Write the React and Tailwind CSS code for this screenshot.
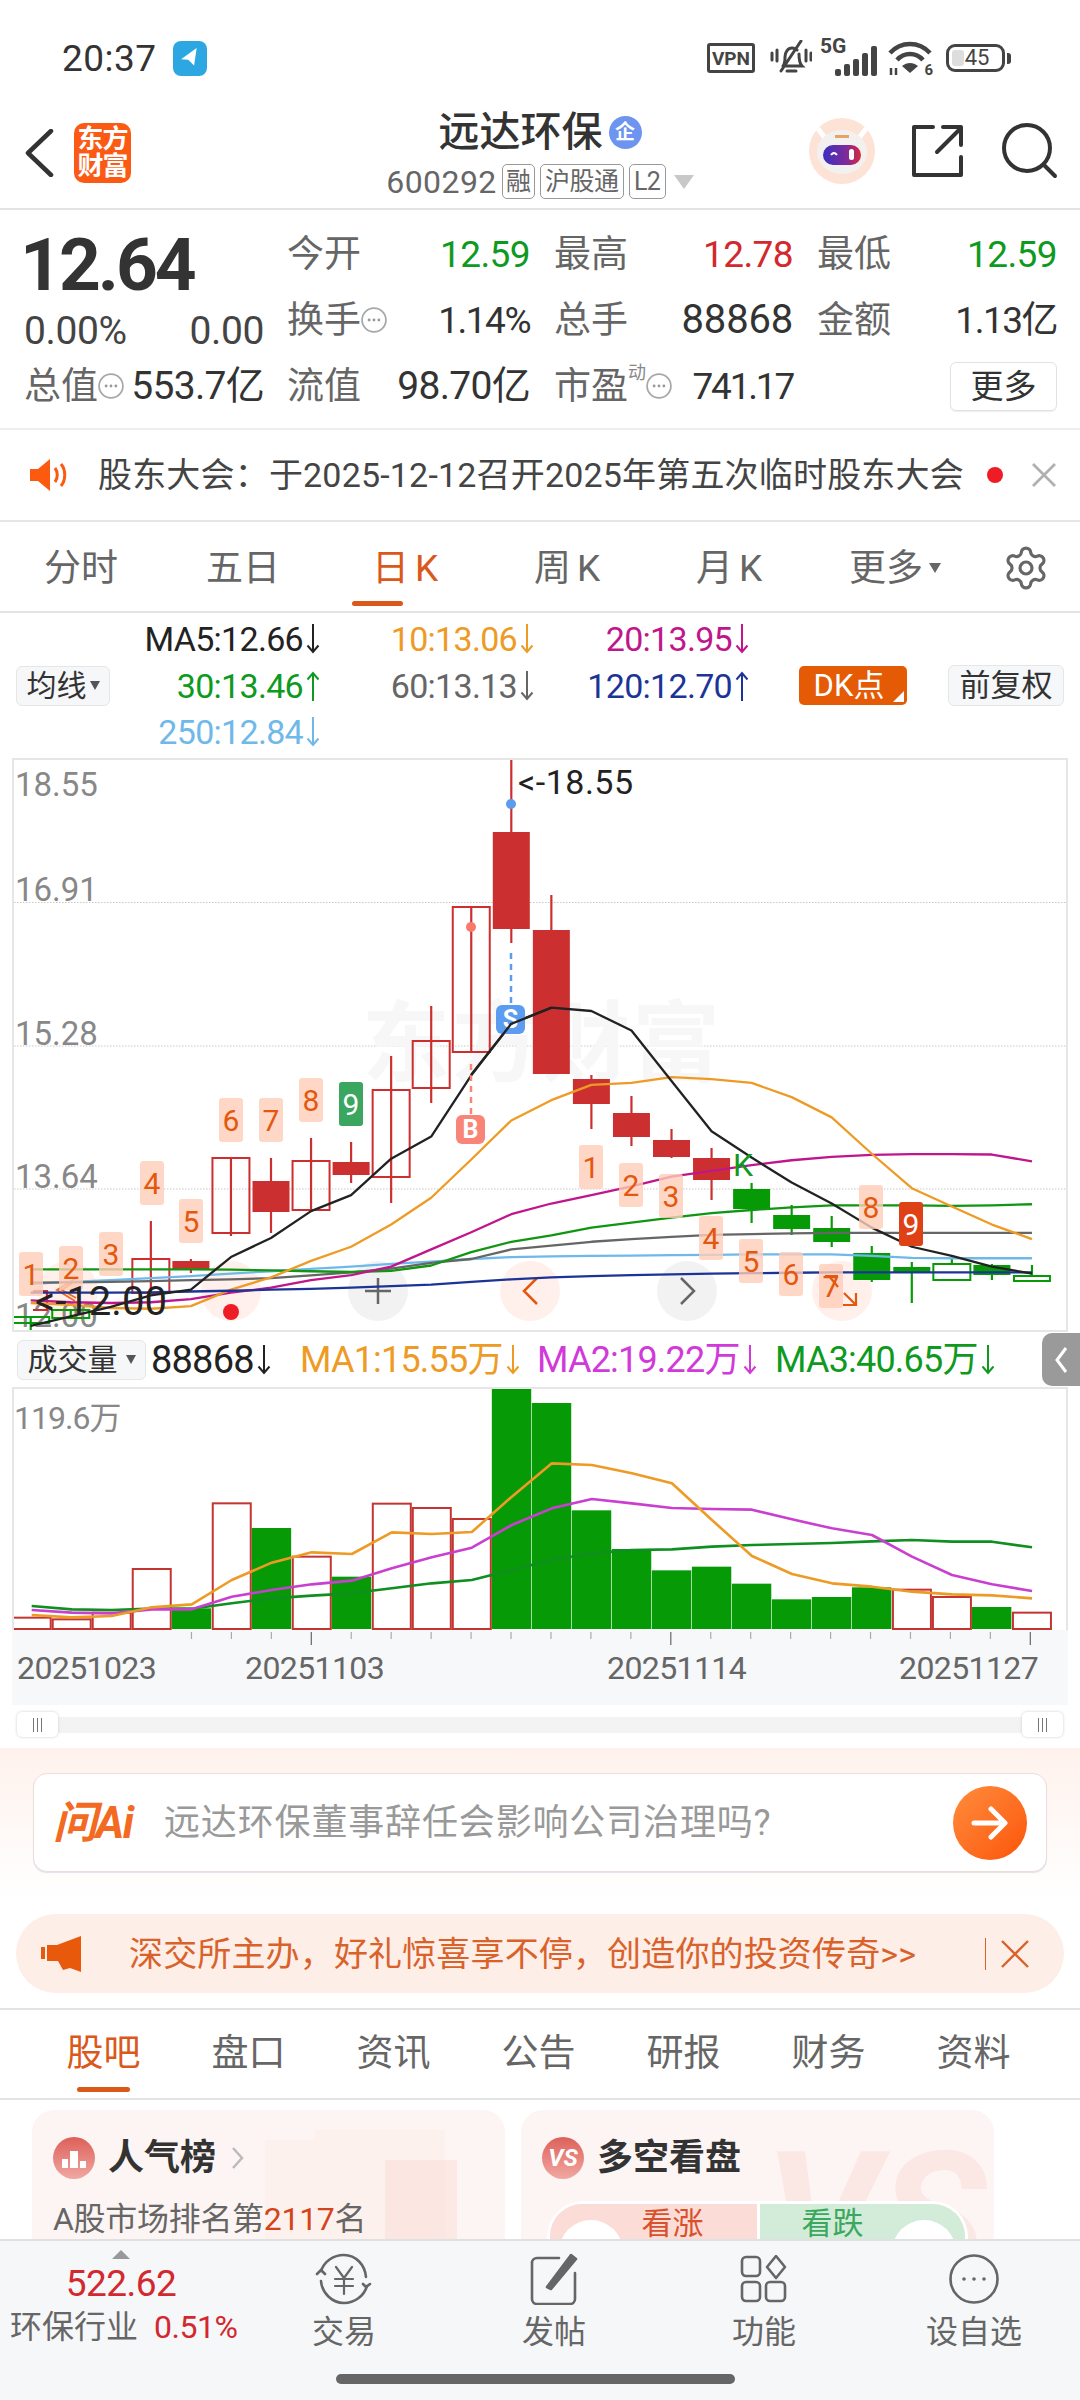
import React from "react";
import { Settings } from "lucide-react";

const cx = (i) => 30.7 + 40.05 * i;
const zy = (z) => 750 + z / 2.613;
const RED = "#cc2f2f";
const GREEN = "#079a07";

const candles = [
  [0, "h", GREEN, 1317, 1323, 1317, 1331],
  [1, "h", GREEN, 1310, 1318, 1310, 1318],
  [3, "h", RED, 1259, 1293, 1221, 1293],
  [4, "f", RED, 1261, 1269, 1259, 1273],
  [5, "h", RED, 1158, 1233, 1158, 1236],
  [6, "f", RED, 1181, 1212, 1158, 1233],
  [7, "h", RED, 1161, 1210, 1138, 1210],
  [8, "f", RED, 1162, 1175, 1142, 1183],
  [9, "h", RED, 1090, 1177, 1056, 1203],
  [10, "h", RED, 1041, 1088, 1006, 1103],
  [11, "h", RED, 907, 1052, 907, 1052],
  [12, "f", RED, 832, 929, 759, 943],
  [13, "f", RED, 930, 1074, 895, 1074],
  [14, "f", RED, 1079, 1104, 1075, 1129],
  [15, "f", RED, 1113, 1137, 1096, 1146],
  [16, "f", RED, 1140, 1157, 1129, 1158],
  [17, "f", RED, 1158, 1180, 1148, 1200],
  [18, "f", GREEN, 1189, 1209, 1183, 1223],
  [19, "f", GREEN, 1215, 1229, 1205, 1235],
  [20, "f", GREEN, 1228, 1242, 1216, 1247],
  [21, "f", GREEN, 1253, 1280, 1246, 1282],
  [22, "f", GREEN, 1267, 1273, 1262, 1303],
  [23, "h", GREEN, 1264, 1280, 1256, 1264],
  [24, "f", GREEN, 1265, 1275, 1264, 1280],
  [25, "h", GREEN, 1276, 1281, 1265, 1276],
];

const maLines = [
  ["#6fb9ea", [1395,1390,1385,1380,1375,1368,1362,1356,1350,1343,1337,1330,1325,1323,1322,1321,1320,1319,1318,1318,1318,1322,1327,1328,1328,1328]],
  ["#666666", [1392,1391,1390,1388,1385,1383,1380,1373,1365,1355,1340,1330,1305,1295,1285,1278,1272,1267,1265,1263,1262,1262,1262,1262,1262,1262]],
  ["#119611", [1357,1357,1357,1357,1357,1358,1360,1362,1364,1361,1347,1312,1285,1268,1248,1235,1222,1210,1202,1195,1190,1190,1190,1191,1190,1187]],
  ["#c0168c", [1438,1443,1445,1443,1435,1418,1405,1385,1372,1350,1305,1260,1213,1185,1163,1140,1115,1100,1085,1072,1063,1058,1056,1056,1057,1075]],
  ["#ee9b26", [1445,1450,1458,1460,1453,1410,1378,1335,1298,1240,1170,1070,968,915,875,870,855,860,870,907,960,1055,1145,1193,1240,1278]],
  ["#1d3497", [1418,1418,1418,1417,1415,1413,1410,1408,1405,1401,1397,1390,1383,1378,1375,1372,1370,1368,1367,1366,1365,1365,1365,1365,1365,1365]],
  ["#222222", [1505,1480,1455,1425,1410,1325,1275,1205,1163,1068,1010,850,715,673,682,733,865,996,1065,1130,1185,1248,1298,1322,1350,1368]],
];

const tdLabels = [
  ["1", 19, 1252], ["2", 59, 1246], ["3", 99, 1232], ["4", 140, 1161], ["5", 179, 1199], ["6", 219, 1098], ["7", 259, 1098], ["8", 299, 1078],
  ["1", 579, 1145], ["2", 619, 1163], ["3", 659, 1174], ["4", 699, 1216], ["5", 739, 1239], ["6", 779, 1252], ["7", 819, 1264], ["8", 859, 1185],
];

const volTops = [[860,"h"],[865,"h"],[845,"h"],[714,"h"],[835,"f"],[517,"h"],[594,"f"],[677,"h"],[740,"f"],[518,"h"],[531,"h"],[564,"h"],[172,"f"],[219,"f"],[541,"f"],[657,"f"],[721,"f"],[710,"f"],[761,"f"],[808,"f"],[801,"f"],[772,"f"],[776,"h"],[798,"h"],[831,"f"],[845,"h"]];
const volLines = [
  ["#0f8f1f", [828,838,840,836,836,820,805,797,790,775,760,750,720,690,670,660,658,650,645,642,639,634,630,635,635,652]],
  ["#c93fd0", [840,848,850,838,838,800,780,763,752,715,682,653,585,535,507,520,534,537,539,568,595,615,680,735,763,783]],
  ["#ee9b26", [855,862,858,832,823,750,698,667,672,607,612,606,500,400,405,430,460,570,678,732,760,770,785,793,796,805]],
];

function Arrow({ up, h = 30 }) {
  return (
    <svg width="14" height={h} viewBox={`0 0 14 ${h}`} className="shrink-0 ml-[3px]" fill="none" stroke="currentColor" strokeWidth="2">
      {up ? <path d={`M7 ${h}V2M1.500 8.500 7 2l5.500 6.500`} /> : <path d={`M7 0V${h - 2}M1.500 ${h - 8.5} 7 ${h - 2}l5.500-6.500`} />}
    </svg>
  );
}

function Dots({ size = 24 }) {
  return (
    <svg width={size} height={size} viewBox="0 0 24 24" className="shrink-0">
      <circle cx="12" cy="12" r="11" fill="none" stroke="#a8a8a8" strokeWidth="1.600" />
      <circle cx="7.500" cy="12" r="1.300" fill="#999" />
      <circle cx="12" cy="12" r="1.300" fill="#999" />
      <circle cx="16.500" cy="12" r="1.300" fill="#999" />
    </svg>
  );
}

function CloseX({ size, color, sw = 2.4 }) {
  return (
    <svg width={size} height={size} viewBox={`0 0 ${size} ${size}`} className="shrink-0" fill="none" stroke={color} strokeWidth={sw}>
      <path d={`M1 1 ${size - 1} ${size - 1}M${size - 1} 1 1 ${size - 1}`} />
    </svg>
  );
}

function StatusBar() {
  return (
    <div className="h-[100px] flex items-center pl-[62px] pr-[69px] pt-[16px]">
      <span className="text-[37px] text-[#333] tracking-[0.5px] leading-none">20:37</span>
      <div className="ml-[16px] w-[34px] h-[35px] rounded-[8px] bg-[#2da7e2] flex items-center justify-center">
        <svg width="20" height="20" viewBox="0 0 20 20"><path d="M18 1 1 10l7 1.500L13 18z" fill="#fff" transform="rotate(-8 10 10)" /></svg>
      </div>
      <div className="ml-auto flex items-center text-[#444]">
        <div className="w-[48px] h-[30px] border-[3px] border-[#444] rounded-[3px] flex items-center justify-center text-[19px] font-bold leading-none">VPN</div>
        <svg className="ml-[15px]" width="42" height="36" viewBox="0 0 42 36" fill="none" stroke="#444" strokeWidth="3" strokeLinecap="round">
          <path d="M13 26c2-2 2-5 2-9 0-5 3-9 7-9 2 0 3 1 5 2M29 14c0 5 0 9 3 12H13M17 31h9M31 1 11 31M2 13v7M7 10v11M36 10v11M41 13v7" />
        </svg>
        <div className="ml-[8px] relative w-[60px] h-[38px]">
          <span className="absolute left-0 -top-[3px] text-[21px] font-bold leading-none">5G</span>
          <svg className="absolute left-[15px] top-[4px]" width="44" height="34" viewBox="0 0 44 34" fill="#444">
            <rect x="0" y="26" width="6" height="7" rx="2" /><rect x="9" y="21" width="6" height="12" rx="2" /><rect x="18" y="16" width="6" height="17" rx="2" /><rect x="27" y="10" width="6" height="23" rx="2" /><rect x="36" y="3" width="6" height="30" rx="2" />
          </svg>
        </div>
        <div className="ml-[8px] relative w-[44px] h-[36px]">
          <svg width="44" height="36" viewBox="0 0 44 36" fill="none" stroke="#444" strokeWidth="4.500">
            <path d="M2 13c11-12 29-12 40 0M9 20c7-8 19-8 26 0" />
            <path d="M14 26c5-4 11-4 16 0l-8 7z" fill="#444" stroke="none" />
            <path d="M3 28v7M8 28v7" strokeWidth="2.500" />
          </svg>
          <span className="absolute -right-[1px] -bottom-[2px] text-[15px] font-bold leading-none">6</span>
        </div>
        <div className="ml-[14px] w-[59px] h-[28px] border-[3px] border-[#444] rounded-[9px] relative flex items-center justify-center text-[22px] text-[#444] leading-none">
          <div className="absolute left-[3px] top-[3px] bottom-[3px] w-[12px] bg-[#ddd] rounded-[3px]" />
          <span className="relative ml-[3px]">45</span>
        </div>
        <div className="ml-[2px] w-[4px] h-[11px] rounded-r-[3px] bg-[#444]" />
      </div>
    </div>
  );
}

function Tag({ children, w }) {
  return (
    <div className={`h-[35px] border border-[#999] rounded-[5px] flex items-center justify-center text-[25px] text-[#666] leading-none tracking-[-0.5px] ${w}`}>{children}</div>
  );
}

function Header() {
  return (
    <div className="h-[108px] border-b-2 border-[#e3e3e3] grid grid-cols-[1fr_auto_1fr] items-start box-content">
      <div className="flex items-center pl-[24px] pt-[23px]">
        <svg width="30" height="48" viewBox="0 0 30 48" fill="none" stroke="#333" strokeWidth="4.500" strokeLinecap="round" strokeLinejoin="round"><path d="M27 2 4 24l23 22" /></svg>
        <div className="ml-[20px] w-[57px] h-[60px] rounded-[10px] bg-[#fc5a14] text-white text-[26px] leading-[27px] font-bold text-center flex flex-col items-center justify-center tracking-[-1px]">
          <span>东方</span><span>财富</span>
        </div>
      </div>
      <div className="flex flex-col items-center pt-[9px]">
        <div className="flex items-center h-[46px]">
          <span className="text-[41px] leading-none text-[#333] font-medium">远达环保</span>
          <div className="ml-[6px] w-[33px] h-[33px] rounded-full bg-[#6d94ee] text-white text-[20px] font-bold flex items-center justify-center leading-none">企</div>
        </div>
        <div className="flex items-center mt-[9px] gap-[5px]">
          <span className="text-[32px] leading-none text-[#666] tracking-[0.4px]">600292</span>
          <Tag w="w-[33px]">融</Tag>
          <Tag w="w-[84px]">沪股通</Tag>
          <Tag w="w-[37px]">L2</Tag>
          <div className="ml-[3px] w-0 h-0 border-l-[10px] border-r-[10px] border-t-[14px] border-l-transparent border-r-transparent border-t-[#c8c8c8]" />
        </div>
      </div>
      <div className="flex items-center justify-end pr-[22px] pt-[18px]">
        <svg width="66" height="66" viewBox="0 0 66 66">
          <defs>
            <linearGradient id="visor" x1="0" x2="1"><stop offset="0" stopColor="#3b2fc0" /><stop offset="0.6" stopColor="#7c2a9c" /><stop offset="1" stopColor="#d9283c" /></linearGradient>
          </defs>
          <circle cx="33" cy="33" r="33" fill="#fde2d6" />
          <path d="M10 12l6 8M56 12l-6 8" stroke="#fff" strokeWidth="5" strokeLinecap="round" />
          <ellipse cx="33" cy="34" rx="25" ry="22" fill="#f3f1f0" />
          <rect x="26" y="17" width="14" height="3" fill="#e8a262" />
          <rect x="14" y="27" width="38" height="20" rx="10" fill="url(#visor)" />
          <path d="M22 37q3-4 6 0" stroke="#fff" strokeWidth="2" fill="none" />
          <rect x="40" y="31" width="5" height="11" rx="2.500" fill="#fff" />
        </svg>
        <svg className="ml-[36px]" width="54" height="54" viewBox="0 0 54 54" fill="none" stroke="#333" strokeWidth="4" strokeLinecap="round" strokeLinejoin="round">
          <path d="M22 3H3v48h47V33M26 28 50 4M32 3h18v18" />
        </svg>
        <svg className="ml-[37px]" width="56" height="56" viewBox="0 0 56 56" fill="none" stroke="#333" strokeWidth="4" strokeLinecap="round">
          <circle cx="25" cy="25" r="23" /><path d="M42 42l11 11" />
        </svg>
      </div>
    </div>
  );
}

function Pair({ label, value, color = "text-[#333]", cls = "text-[37px] tracking-[-0.6px]", children }) {
  return (
    <div className="h-[66px] flex items-center justify-between">
      <div className="flex items-center text-[37px] text-[#666] leading-none">{label}{children}</div>
      <span className={`leading-none ${cls} ${color}`}>{value}</span>
    </div>
  );
}

function Quote() {
  return (
    <div className="h-[218px] flex pl-[24px] border-b-2 border-[#eeeeee] box-content">
      <div className="w-[240px] shrink-0 flex flex-col">
        <div className="h-[94px] pt-[22px] -ml-[4px] text-[73px] font-bold text-[#333] leading-[66px] tracking-[-3px]">12.64</div>
        <div className="h-[54px] flex items-center justify-between text-[39px] text-[#444] leading-none tracking-[-0.4px]">
          <span>0.00%</span><span>0.00</span>
        </div>
        <div className="h-[56px] flex items-center justify-between">
          <div className="flex items-center text-[37px] text-[#666] leading-none -mr-[5px]">总值<Dots size={26} /></div>
          <span className="text-[39px] text-[#333] leading-none tracking-[-0.7px]">553.7亿</span>
        </div>
      </div>
      <div className="ml-[23px] pt-[11px] grid grid-cols-[243px_239px_240px] gap-x-[24px] content-start">
        <Pair label="今开" value="12.59" color="text-[#0e9a1e]" />
        <Pair label="最高" value="12.78" color="text-[#d2282e]" />
        <Pair label="最低" value="12.59" color="text-[#0e9a1e]" />
        <Pair label="换手" value="1.14%" cls="text-[37px] tracking-[-1.500px]"><Dots size={26} /></Pair>
        <Pair label="总手" value="88868" cls="text-[40px] tracking-[-0.2px]" />
        <Pair label="金额" value="1.13亿" cls="text-[37px] tracking-[-1.500px]" />
        <Pair label="流值" value="98.70亿" cls="text-[39px] tracking-[-0.7px]" />
        <Pair label="市盈" value="741.17" cls="text-[37px] tracking-[-2.200px]">
          <div className="relative flex items-center">
            <span className="text-[18px] text-[#888] -mt-[26px]">动</span>
            <Dots size={26} />
          </div>
        </Pair>
        <div className="h-[66px] flex items-center justify-end">
          <div className="w-[107px] h-[49px] border border-[#e2e2e2] rounded-[6px] flex items-center justify-center text-[33px] text-[#333] leading-none shadow-[0_1px_1px_#eee]">更多</div>
        </div>
      </div>
    </div>
  );
}

function Notice() {
  return (
    <div className="h-[90px] border-b-2 border-[#e6e6e6] flex items-center box-content pl-[30px]">
      <svg width="40" height="32" viewBox="0 0 40 32" className="shrink-0">
        <path d="M0 10h8L20 0v32L8 22H0z" fill="#fb5a0f" />
        <path d="M25 9c3 4 3 10 0 14M31 5c5 6 5 16 0 22" stroke="#fb5a0f" strokeWidth="3" fill="none" />
      </svg>
      <span className="ml-[28px] text-[34px] text-[#444] leading-none whitespace-nowrap tracking-[0.18px]">股东大会：于2025-12-12召开2025年第五次临时股东大会</span>
      <div className="ml-[23px] w-[16px] h-[16px] rounded-full bg-[#ee1c25] shrink-0" />
      <div className="ml-[29px]"><CloseX size={24} color="#b0b0b0" sw={2.800} /></div>
    </div>
  );
}

function Tabs() {
  const items = ["分时", "五日", "日K", "周K", "月K"];
  return (
    <div className="h-[89px] border-b-2 border-[#e3e3e3] flex box-content">
      {items.map((t, i) => (
        <div key={t} className={`relative w-[162px] flex items-center justify-center text-[37px] leading-none pt-[3px] ${i === 2 ? "text-[#d9581a]" : "text-[#666]"}`}>
          {t[0]}{t[1] === "K" ? <span className="ml-[6px] font-normal">K</span> : t[1]}
          {i === 2 && <div className="absolute left-[28px] bottom-[5px] w-[51px] h-[5px] rounded-full bg-[#d9581a]" />}
        </div>
      ))}
      <div className="w-[162px] flex items-center justify-center text-[37px] text-[#666] leading-none pt-[3px] pl-[8px]">
        更多<span className="ml-[6px] w-0 h-0 border-l-[6px] border-r-[6px] border-t-[10px] border-l-transparent border-r-transparent border-t-[#666]" />
      </div>
      <div className="w-[106px] flex items-center justify-center pt-[3px] pl-px"><Settings size={48} strokeWidth={1.600} className="text-[#666]" /></div>
    </div>
  );
}

function Ma({ text, color, up }) {
  return (
    <div className={`h-[46.500px] flex items-center justify-end text-[34px] leading-none tracking-[-0.7px] ${color}`}>
      <span>{text}</span><Arrow up={up} />
    </div>
  );
}

function MaRow() {
  return (
    <div className="h-[145px] flex items-center pl-[16px]">
      <div className="w-[94px] h-[40px] border border-[#e6e6e6] bg-[#f6f7f9] rounded-[6px] flex items-center justify-center text-[30px] text-[#333] leading-none">
        均线<span className="ml-[3px] w-0 h-0 border-l-[5px] border-r-[5px] border-t-[9px] border-l-transparent border-r-transparent border-t-[#555]" />
      </div>
      <div className="grid grid-cols-[210px_214px_215px]">
        <Ma text="MA5:12.66" color="text-[#222]" />
        <Ma text="10:13.06" color="text-[#ee9b26]" />
        <Ma text="20:13.95" color="text-[#c0168c]" />
        <Ma text="30:13.46" color="text-[#0e9a1e]" up />
        <Ma text="60:13.13" color="text-[#666]" />
        <Ma text="120:12.70" color="text-[#1d3497]" up />
        <Ma text="250:12.84" color="text-[#6fb9ea]" />
      </div>
      <div className="ml-[50px] relative w-[108px] h-[39px] rounded-[5px] bg-[#e55a05] flex items-center justify-center text-[31px] text-white leading-none pr-[8px]">
        DK点
        <div className="absolute right-[3px] bottom-[3px] w-0 h-0 border-l-[11px] border-b-[11px] border-l-transparent border-b-white" />
      </div>
      <div className="ml-[41px] w-[116px] h-[41px] border border-[#e6e6e6] bg-[#f6f7f9] rounded-[6px] flex items-center justify-center text-[31px] text-[#333] leading-none">前复权</div>
    </div>
  );
}

function CircleBtn({ x, peach, children }) {
  return (
    <g>
      <circle cx={x} cy="1291" r="30" fill={peach ? "#ff6a3a" : "#000"} opacity={peach ? 0.1 : 0.05} />
      {children}
    </g>
  );
}

function KChart() {
  const w = 40;
  return (
    <div className="mx-[12px] w-[1056px] h-[574px] border-2 border-[#e6e6e6] bg-white overflow-hidden">
      <svg width="1052" height="570" viewBox="14 760 1052 570" className="block" fontFamily="Roboto, 'Noto Sans CJK SC', sans-serif">
        {[902.5, 1046, 1189].map((y) => (
          <line key={y} x1="14" x2="1066" y1={y} y2={y} stroke="#c9c9c9" strokeWidth="1" strokeDasharray="1.500 1.500" />
        ))}
        <text x="362" y="1074" fontSize="88" fontWeight="700" fill="#f7f7f7" letterSpacing="2">东方财富</text>
        {[["18.55", 796], ["16.91", 901], ["15.28", 1045], ["13.64", 1188], ["12.00", 1327]].map(([t, y]) => (
          <text key={t} x="15" y={y} fontSize="33" fill="#888">{t}</text>
        ))}
        <CircleBtn x={68} peach />
        <CircleBtn x={231} peach />
        <CircleBtn x={378}><path d="M378 1278v26M365 1291h26" stroke="#666" strokeWidth="2.500" /></CircleBtn>
        <CircleBtn x={530} peach><path d="M537 1278l-13 13 13 13" stroke="#e4570e" strokeWidth="2.500" fill="none" /></CircleBtn>
        <CircleBtn x={687}><path d="M681 1278l13 13-13 13" stroke="#666" strokeWidth="2.500" fill="none" /></CircleBtn>
        <CircleBtn x={842} peach />
        <circle cx="231" cy="1312" r="8" fill="#ee1c25" />
        {candles.map(([i, t, c, top, bot, wt, wb]) => {
          const x = cx(i);
          const bw = i === 25 ? 36 : w - 3;
          return (
            <g key={i}>
              <line x1={x} x2={x} y1={wt} y2={wb} stroke={c} strokeWidth="2.200" />
              <rect x={x - bw / 2} y={top} width={bw} height={bot - top} fill={t === "f" ? c : "none"} stroke={c} strokeWidth={t === "f" ? 0 : 2} />
            </g>
          );
        })}
        <path d="M33 1291h14v19H33" fill="none" stroke={RED} strokeWidth="2.200" />
        <path d="M78 1277 57 1290l18 11M72 1283 62 1290l14 8" fill="none" stroke="#e96d2c" strokeWidth="2" />
        {maLines.map(([c, ys]) => (
          <polyline key={c} fill="none" stroke={c} strokeWidth="2.300" strokeLinejoin="round" points={ys.map((z, i) => `${cx(i)},${zy(z)}`).join(" ")} />
        ))}
        {tdLabels.map(([t, x, y], k) => (
          <g key={k}>
            <rect x={x} y={y} width="24" height="44" rx="3" fill="#ffcdb8" opacity="0.8" />
            <text x={x + 12} y={y + 33} fontSize="30" fill="#e4570e" textAnchor="middle">{t}</text>
          </g>
        ))}
        <rect x="339" y="1082" width="24" height="44" rx="3" fill="#3aa660" />
        <text x="351" y="1115" fontSize="30" fill="#fff" textAnchor="middle">9</text>
        <rect x="899" y="1202" width="24" height="44" rx="3" fill="#df4116" />
        <text x="911" y="1235" fontSize="30" fill="#fff" textAnchor="middle">9</text>
        <path d="M825 1276h13M829 1276l9 11M856 1293v12h-13M856 1305l-12-12" fill="none" stroke="#e4570e" strokeWidth="2.200" />
        <line x1="471" x2="471" y1="1064" y2="1114" stroke="#f98578" strokeWidth="2.500" strokeDasharray="6 5" />
        <rect x="456" y="1115" width="29" height="29" rx="6" fill="#f98578" />
        <text x="470.500" y="1138" fontSize="25" fontWeight="700" fill="#fff" textAnchor="middle">B</text>
        <circle cx="471" cy="927" r="5" fill="#f9786a" />
        <line x1="511" x2="511" y1="953" y2="1003" stroke="#5b9cf0" strokeWidth="2.500" strokeDasharray="6 5" />
        <rect x="496" y="1005" width="29" height="29" rx="6" fill="#5b9cf0" />
        <text x="510.500" y="1028" fontSize="25" fontWeight="700" fill="#fff" textAnchor="middle">S</text>
        <polyline fill="none" stroke="#222" strokeWidth="2.300" points={`471,1075 511,1024 551,1008`} />
        <circle cx="511" cy="804" r="5" fill="#5b9cf0" />
        <text x="518" y="794" fontSize="34" fill="#222" letterSpacing="0.500">{"<-18.55"}</text>
        <text x="35" y="1315" fontSize="40" fill="#222">{"<-12.00"}</text>
        <text x="733" y="1176" fontSize="32" fill="#0e9a1e">K</text>
      </svg>
    </div>
  );
}

function VolHeader() {
  const Item = ({ t, c, w, size = "text-[36px]" }) => (
    <div className={`flex items-center leading-none tracking-[-0.8px] ${size} ${c} ${w}`}><span>{t}</span><Arrow /></div>
  );
  return (
    <div className="h-[55px] flex items-center pl-[17px]">
      <div className="w-[129px] h-[40px] border border-[#e6e6e6] bg-[#f6f7f9] rounded-[6px] flex items-center justify-center text-[30px] text-[#333] leading-none">
        成交量<span className="ml-[8px] w-0 h-0 border-l-[5px] border-r-[5px] border-t-[9px] border-l-transparent border-r-transparent border-t-[#555]" />
      </div>
      <div className="w-[5px]" />
      <Item t="88868" c="text-[#222]" w="w-[149px]" size="text-[38px]" />
      <Item t="MA1:15.55万" c="text-[#ee9b26]" w="w-[237px]" />
      <Item t="MA2:19.22万" c="text-[#d13ad8]" w="w-[238px]" />
      <Item t="MA3:40.65万" c="text-[#0e9a1e]" />
      <div className="ml-auto w-[38px] h-[53px] bg-[#9a9a9a] rounded-l-[10px] flex items-center justify-center">
        <svg width="14" height="28" viewBox="0 0 14 28" fill="none" stroke="#fff" strokeWidth="3"><path d="M12 2 3 14l9 12" /></svg>
      </div>
    </div>
  );
}

function VolChart() {
  const vy = (z) => 1330 + z / 3;
  const lx = (i) => (46 + 58.1 * i) / 1.452;
  return (
    <div className="mx-[12px] w-[1056px] h-[243px] border-x-2 border-t-2 border-[#e6e6e6] bg-white">
      <svg width="1052" height="241" viewBox="14 1389 1052 241" className="block" fontFamily="Roboto, 'Noto Sans CJK SC', sans-serif">
        {volTops.map(([z, t], i) => {
          const x = 11.7 + 40.01 * i;
          const top = vy(z);
          return t === "f" ? (
            <rect key={i} x={x} y={top} width="39.400" height={1629 - top} fill={GREEN} />
          ) : (
            <rect key={i} x={x + 1} y={top + 1} width="38" height={1628 - top} fill="#fff" stroke="#c23531" strokeWidth="2" />
          );
        })}
        {volLines.map(([c, ys]) => (
          <polyline key={c} fill="none" stroke={c} strokeWidth="2.600" strokeLinejoin="round" points={ys.map((z, i) => `${lx(i)},${vy(z)}`).join(" ")} />
        ))}
        <text x="14" y="1429" fontSize="32" fill="#888" letterSpacing="-1">119.6万</text>
      </svg>
    </div>
  );
}

function TimeAxis() {
  const ticks = Array.from({ length: 22 }, (_, k) => (278 + 58 * k) / 1.452);
  return (
    <div className="mx-[12px] w-[1056px] h-[75px] bg-[#f7f8fa]">
      <svg width="1056" height="16" viewBox="12 1630 1056 16" className="block">
        {ticks.map((x, k) => (
          <line key={k} x1={x} x2={x} y1="1632" y2={k === 3 || k === 12 || k === 21 ? 1645 : 1639} stroke={k === 3 || k === 12 || k === 21 ? "#666" : "#aaa"} strokeWidth="1.200" />
        ))}
      </svg>
      <div className="flex text-[32px] text-[#666] leading-none tracking-[-0.6px] mt-[6px]">
        <span className="ml-[5px] w-[139px]">20251023</span>
        <span className="ml-[89px] w-[134px]">20251103</span>
        <span className="ml-[228px] w-[130px]">20251114</span>
        <span className="ml-[162px] w-[133px]">20251127</span>
      </div>
    </div>
  );
}

function Handle() {
  return (
    <div className="w-[41px] h-[25px] bg-white rounded-[5px] shadow-[0_0_3px_#ccc] flex items-center justify-center gap-[3px] shrink-0">
      <i className="w-px h-[14px] bg-[#777]" /><i className="w-px h-[14px] bg-[#777]" /><i className="w-px h-[14px] bg-[#777]" />
    </div>
  );
}

function Scroll() {
  return (
    <div className="h-[43px] px-[17px] flex items-center pb-[4px]">
      <div className="relative w-full h-[16px] bg-[#f3f3f3] flex items-center justify-between">
        <Handle /><Handle />
      </div>
    </div>
  );
}

function Ai() {
  return (
    <div className="h-[152px] bg-linear-to-b from-[#fff2ed] to-white pt-[25px] px-[33px]">
      <div className="h-[99px] rounded-[14px] border border-[#ecdedc] bg-white shadow-[0_1px_1px_#dfe3ea] flex items-center pl-[20px] pr-[19px]">
        <span className="-ml-[1px] w-[91px] text-[44px] font-bold italic text-[#f36a22] leading-none tracking-[-1.500px]">问Ai</span>
        <span className="ml-[20px] text-[36px] text-[#999] leading-none tracking-[0.85px]">远达环保董事辞任会影响公司治理吗?</span>
        <div className="ml-auto w-[74px] h-[74px] rounded-full bg-linear-to-br from-[#ff8c3a] to-[#fb5300] flex items-center justify-center">
          <svg width="38" height="34" viewBox="0 0 38 34" fill="none" stroke="#fff" strokeWidth="5" strokeLinecap="round" strokeLinejoin="round"><path d="M3 17h30M20 3l14 14-14 14" /></svg>
        </div>
      </div>
    </div>
  );
}

function Promo() {
  return (
    <div className="mt-[14px] mx-[16px] h-[79px] rounded-full bg-[#fdeee7] flex items-center pl-[25px]">
      <svg width="40" height="36" viewBox="0 0 40 36" className="shrink-0">
        <path d="M0 11h4v12H0zM6 9h10L40 0v36l-11-4-7 2-5-9H6z" fill="#e8590c" />
      </svg>
      <span className="ml-[48px] text-[34px] text-[#d9622b] leading-none whitespace-nowrap tracking-[0.15px]">深交所主办，好礼惊喜享不停，创造你的投资传奇&gt;&gt;</span>
      <div className="ml-[69px] w-px h-[32px] bg-[#d9622b]" />
      <div className="ml-[15px]"><CloseX size={28} color="#d9622b" /></div>
    </div>
  );
}

function SubTabs() {
  const items = ["股吧", "盘口", "资讯", "公告", "研报", "财务", "资料"];
  return (
    <div className="mt-[15px] h-[88px] border-y-2 border-[#e3e3e3] flex pl-[31px] box-content">
      {items.map((t, i) => (
        <div key={t} className={`relative w-[145px] flex items-center justify-center text-[37px] leading-none pb-[2px] ${i === 0 ? "text-[#d9581a]" : "text-[#666]"}`}>
          {t}
          {i === 0 && <div className="absolute left-[46px] bottom-[6px] w-[53px] h-[5px] rounded-full bg-[#d9581a]" />}
        </div>
      ))}
    </div>
  );
}

function Cards() {
  return (
    <div className="flex-1 overflow-hidden flex pl-[32px] pt-[10px] gap-[16px]">
      <div className="relative overflow-hidden w-[473px] h-[260px] rounded-[22px] bg-[#fdf5f3] shrink-0">
        <svg className="absolute right-0 top-0" width="240" height="130" viewBox="0 0 240 130">
          <path d="M0 30h50V20h130v110H0z" fill="#fdeeea" opacity="0.5" />
          <rect x="120" y="50" width="72" height="80" fill="#fbdcd6" opacity="0.5" />
        </svg>
        <div className="relative flex items-center pt-[27px] pl-[21px]">
          <svg width="42" height="42" viewBox="0 0 42 42">
            <defs><linearGradient id="red1" x1="0" y1="0" x2="0" y2="1"><stop offset="0" stopColor="#dd5f5a" /><stop offset="1" stopColor="#f0a8a2" /></linearGradient></defs>
            <circle cx="21" cy="21" r="21" fill="url(#red1)" />
            <path d="M9 22h6v9H9zM17 14h8v17h-8zM27 24h6v7h-6z" fill="#fff" />
          </svg>
          <span className="ml-[13px] text-[36px] font-bold text-[#333] leading-none">人气榜</span>
          <svg className="ml-[15px]" width="13" height="24" viewBox="0 0 13 24" fill="none" stroke="#bbb" strokeWidth="2.500"><path d="M2 2l9 10-9 10" /></svg>
        </div>
        <div className="relative mt-[24px] pl-[21px] text-[32px] text-[#666] leading-none tracking-[-0.3px]">A股市场排名第<span className="text-[#d4441c]">2117</span>名</div>
      </div>
      <div className="relative overflow-hidden w-[473px] h-[260px] rounded-[22px] bg-[#fdf5f3] shrink-0">
        <span className="absolute right-[8px] top-[18px] text-[180px] font-bold italic leading-none text-[#fae3de] opacity-70">VS</span>
        <div className="relative flex items-center pt-[27px] pl-[21px]">
          <div className="w-[42px] h-[42px] rounded-full bg-linear-to-b from-[#dd5f5a] to-[#f0a8a2] text-white text-[24px] font-bold italic flex items-center justify-center leading-none">VS</div>
          <span className="ml-[13px] text-[36px] font-bold text-[#333] leading-none">多空看盘</span>
        </div>
        <div className="relative mt-[22px] mx-[26px] h-[90px] rounded-t-[36px] bg-white p-[3px] flex overflow-hidden">
          <div className="relative w-[207px] bg-[#fbdcd6] rounded-tl-[32px] mr-[3px] text-center pt-[2px] text-[31px] leading-none text-[#d9512c]">
            <span className="relative left-[19px] top-[2px]">看涨</span>
            <div className="absolute -left-[4px] top-[16px] ml-[13px] w-[64px] h-[64px] rounded-full bg-white" />
          </div>
          <div className="relative flex-1 bg-[#d3ecd9] rounded-tr-[32px] text-center pt-[2px] text-[31px] leading-none text-[#3ca85e]">
            <span className="relative -left-[30px] top-[2px]">看跌</span>
            <div className="absolute right-[9px] top-[16px] w-[64px] h-[64px] rounded-full bg-white" />
          </div>
        </div>
      </div>
    </div>
  );
}

function BottomBar() {
  const Item = ({ icon, label, w, ml }) => (
    <div className={`flex flex-col items-center ${w} ${ml}`}>
      <div className="h-[58px] flex items-center justify-center">{icon}</div>
      <span className="mt-[8px] text-[32px] text-[#666] leading-none">{label}</span>
    </div>
  );
  const st = { fill: "none", stroke: "#666", strokeWidth: 2.6, strokeLinecap: "round", strokeLinejoin: "round" };
  return (
    <div className="h-[161px] shrink-0 border-t-2 border-[#e0e0e0] bg-[#f6f7f9] relative">
      <div className="flex pt-[9px]">
        <div className="w-[244px] shrink-0 flex flex-col pl-[10px]">
          <div className="ml-[102px] w-0 h-0 border-l-[9px] border-r-[9px] border-b-[9px] border-l-transparent border-r-transparent border-b-[#999]" />
          <div className="mt-[6px] w-[224px] text-center text-[37px] text-[#d2282e] leading-none -ml-px tracking-[-0.5px]">522.62</div>
          <div className="mt-[9px] flex items-center whitespace-nowrap leading-none">
            <span className="text-[32px] text-[#666]">环保行业</span>
            <span className="ml-[16px] text-[32px] text-[#d2282e] tracking-[-0.5px]">0.51%</span>
          </div>
        </div>
        <Item ml="ml-[10px]" w="w-[180px]" label="交易" icon={
          <svg width="58" height="52" viewBox="0 0 58 52" {...st}>
            <path d="M6 18A24 24 0 0 1 29 2c12 0 21 10 22 22M52 33A24 24 0 0 1 29 50C17 50 7 40 6 28" />
            <path d="M2 21l4-4 4 4M55 31l-4 3-3-3" />
            <path d="M21 14l8 11 8-11M20 26h18M20 33h18M29 25v16" strokeWidth="2.200" />
          </svg>} />
        <Item ml="ml-[30px]" w="w-[180px]" label="发帖" icon={
          <svg width="50" height="52" viewBox="0 0 50 52" {...st}>
            <path d="M30 5H8a5 5 0 0 0-5 5v36a5 5 0 0 0 5 5h33a5 5 0 0 0 5-5V20" />
            <path d="M18 34 42 2l5 4-25 30z" fill="#666" />
          </svg>} />
        <Item ml="ml-[30px]" w="w-[180px]" label="功能" icon={
          <svg width="48" height="48" viewBox="0 0 48 48" {...st}>
            <rect x="2" y="2" width="18" height="19" rx="4" />
            <path d="M36 1l9 11-9 11-9-11z" />
            <rect x="2" y="27" width="18" height="19" rx="4" />
            <rect x="26" y="27" width="19" height="19" rx="4" />
          </svg>} />
        <Item ml="ml-[30px]" w="w-[180px]" label="设自选" icon={
          <svg width="50" height="50" viewBox="0 0 50 50" {...st}>
            <circle cx="25" cy="25" r="23.500" />
            <circle cx="15" cy="25" r="1.800" fill="#666" stroke="none" /><circle cx="25" cy="25" r="1.800" fill="#666" stroke="none" /><circle cx="35" cy="25" r="1.800" fill="#666" stroke="none" />
          </svg>} />
      </div>
      <div className="absolute left-[336px] bottom-[16px] w-[399px] h-[10px] rounded-full bg-[#666]" />
    </div>
  );
}

export default function App() {
  return (
    <div className="w-[1080px] h-[2400px] bg-white overflow-hidden flex flex-col font-['Roboto','Noto_Sans_CJK_SC',sans-serif]">
      <StatusBar />
      <Header />
      <Quote />
      <Notice />
      <Tabs />
      <MaRow />
      <KChart />
      <VolHeader />
      <VolChart />
      <TimeAxis />
      <Scroll />
      <Ai />
      <Promo />
      <SubTabs />
      <Cards />
      <BottomBar />
    </div>
  );
}
